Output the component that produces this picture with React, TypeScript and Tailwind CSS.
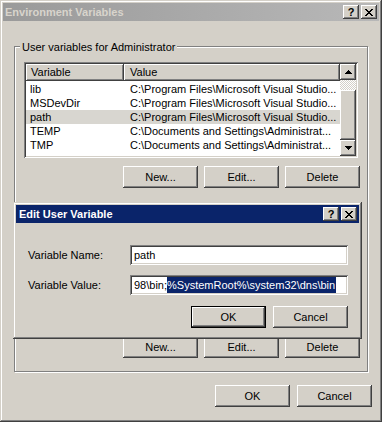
import type { ReactNode } from 'react'

const FONT = "font-['Tahoma','Liberation_Sans','Arial',sans-serif]"
const RAISED = 'shadow-[inset_-1px_-1px_#404040,inset_1px_1px_#ffffff,inset_-2px_-2px_#808080,inset_2px_2px_#d4d0c8]'
const SUNKEN = 'shadow-[inset_1px_1px_#808080,inset_-1px_-1px_#ffffff,inset_2px_2px_#404040,inset_-2px_-2px_#d4d0c8]'
const FRAME = 'shadow-[inset_-1px_-1px_#404040,inset_1px_1px_#d4d0c8,inset_-2px_-2px_#808080,inset_2px_2px_#ffffff]'

const ROWS = [
  { name: 'lib', value: 'C:\\Program Files\\Microsoft Visual Studio...' },
  { name: 'MSDevDir', value: 'C:\\Program Files\\Microsoft Visual Studio...' },
  { name: 'path', value: 'C:\\Program Files\\Microsoft Visual Studio...', selected: true },
  { name: 'TEMP', value: 'C:\\Documents and Settings\\Administrat...' },
  { name: 'TMP', value: 'C:\\Documents and Settings\\Administrat...' },
]

const Button = ({ children, def, w = 'w-[75px]' }: { children: ReactNode; def?: boolean; w?: string }) => (
  <div
    className={`${w} h-[22px] flex items-center justify-center bg-[#d4d0c8] text-black ${
      def
        ? 'border border-black shadow-[inset_-1px_-1px_#404040,inset_1px_1px_#ffffff,inset_-2px_-2px_#808080]'
        : RAISED
    }`}
  >
    {children}
  </div>
)

const CaptionButtons = () => (
  <div className="flex items-center gap-[2px] mr-[2px]">
    <div className={`w-[16px] h-[14px] bg-[#d4d0c8] ${RAISED} flex items-center justify-center text-[11px] font-bold text-black leading-none pt-[1px]`}>
      ?
    </div>
    <div className={`w-[16px] h-[14px] bg-[#d4d0c8] ${RAISED} flex items-center justify-center`}>
      <svg width="8" height="7" viewBox="0 0 8 7" shapeRendering="crispEdges">
        <path d="M0 0h2v1h1v1h2V1h1V0h2v1H7v1H6v1H5v1h1v1h1v1h1v1H6V6H5V5H3v1H2v1H0V6h1V5h1V4h1V3H2V2H1V1H0z" fill="#000" />
      </svg>
    </div>
  </div>
)

const Arrow = ({ up }: { up?: boolean }) => (
  <svg width="7" height="4" viewBox="0 0 7 4" shapeRendering="crispEdges">
    <path d={up ? 'M3 0h1v1h1v1h1v1h1v1H0V3h1V2h1V1h1z' : 'M0 0h7v1H6v1H5v1H4v1H3V3H2V2H1V1H0z'} fill="#000" />
  </svg>
)

const ListView = () => (
  <div className={`w-[334px] h-[96px] p-[2px] bg-white ${SUNKEN} flex`}>
    <div className="flex-1 flex flex-col">
      <div className="flex h-[17px]">
        <div className={`w-[98px] bg-[#d4d0c8] ${RAISED} pl-[5px] flex items-center`}>Variable</div>
        <div className={`flex-1 bg-[#d4d0c8] ${RAISED} pl-[6px] flex items-center`}>Value</div>
      </div>
      <div className="pt-[1px]">
        {ROWS.map((r) => (
          <div key={r.name} className={`flex h-[14px] items-center ${r.selected ? 'bg-[#d8d6d0]' : ''}`}>
            <div className="w-[98px] pl-[4px]">{r.name}</div>
            <div className="pl-[6px] whitespace-nowrap">{r.value}</div>
          </div>
        ))}
      </div>
    </div>
    <div className="w-[16px] flex flex-col">
      <div className={`h-[16px] bg-[#d4d0c8] ${RAISED} flex items-center justify-center`}>
        <Arrow up />
      </div>
      <div className="h-[10px] bg-[repeating-conic-gradient(#ffffff_0_25%,#d4d0c8_0_50%)] bg-[length:2px_2px]" />
      <div className={`flex-1 bg-[#d4d0c8] ${RAISED}`} />
      <div className={`h-[16px] bg-[#d4d0c8] ${RAISED} flex items-center justify-center`}>
        <Arrow />
      </div>
    </div>
  </div>
)

const EditDialog = () => (
  <div className={`absolute left-[13px] top-[202px] w-[349px] h-[137px] p-[3px] bg-[#d4d0c8] ${FRAME}`}>
    <div className="h-[18px] bg-[#0a246a] flex items-center justify-between">
      <span className="pl-[3px] text-white font-bold">Edit User Variable</span>
      <CaptionButtons />
    </div>
    <div className="pl-[12px] pr-[11px]">
      <div className="flex items-center mt-[22px]">
        <div className="w-[102px]">Variable Name:</div>
        <div className={`w-[218px] h-[20px] bg-white ${SUNKEN} flex items-center pl-[4px]`}>path</div>
      </div>
      <div className="flex items-center mt-[10px]">
        <div className="w-[102px]">Variable Value:</div>
        <div className={`w-[218px] h-[20px] bg-white ${SUNKEN} flex items-center overflow-hidden pl-[4px]`}>
          <span className="whitespace-nowrap">98\bin;</span>
          <span className="whitespace-nowrap bg-[#0a246a] text-white pr-[1px]">%SystemRoot%\system32\dns\bin</span>
        </div>
      </div>
      <div className="flex justify-end gap-[7px] mt-[11px]">
        <Button def>OK</Button>
        <Button>Cancel</Button>
      </div>
    </div>
  </div>
)

export default function App() {
  return (
    <div className={`${FONT} text-[11px] text-black relative w-[382px] h-[422px] bg-[#d4d0c8] p-[3px] ${FRAME}`}>
      <div className="h-[18px] bg-gradient-to-r from-[#9a9a9a] to-[#b8b8b8] flex items-center justify-between">
        <span className="pl-[2px] font-bold text-[#d8d4cc]">Environment Variables</span>
        <CaptionButtons />
      </div>

      <div className="relative mt-[25px] ml-[11px] w-[354px] h-[326px] border border-[#808080] shadow-[1px_1px_0_#ffffff,inset_1px_1px_0_#ffffff]">
        <span className="absolute left-[5px] -top-[8px] px-[2px] bg-[#d4d0c8]">User variables for Administrator</span>
        <div className="mt-[15px] ml-[9px]">
          <ListView />
        </div>
        <div className="flex justify-end gap-[6px] mt-[8px] pr-[7px]">
          <Button>New...</Button>
          <Button>Edit...</Button>
          <Button>Delete</Button>
        </div>
        <div className="flex justify-end gap-[6px] mt-[148px] pr-[7px]">
          <Button>New...</Button>
          <Button>Edit...</Button>
          <Button>Delete</Button>
        </div>
      </div>

      <div className="flex justify-end gap-[7px] mt-[13px] mr-[7px]">
        <Button>OK</Button>
        <Button>Cancel</Button>
      </div>

      <EditDialog />
    </div>
  )
}
